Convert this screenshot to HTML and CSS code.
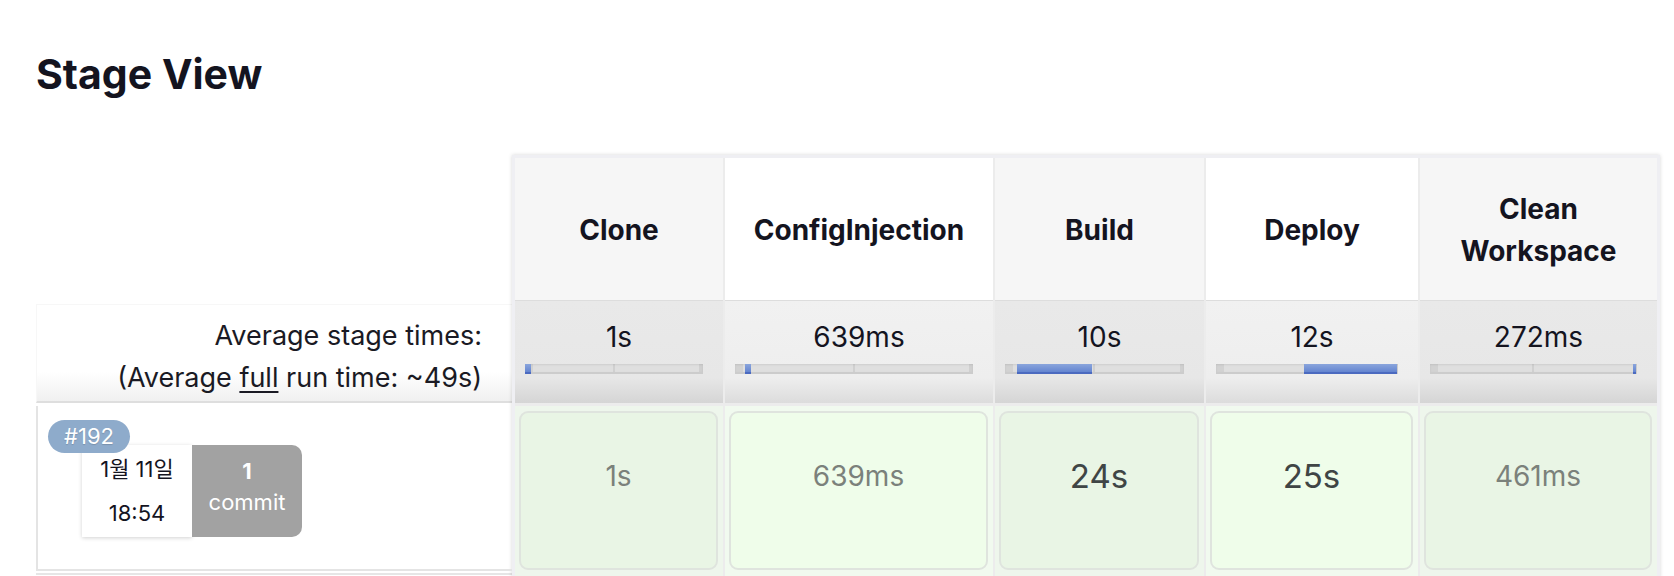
FILE: index.html
```html
<!DOCTYPE html>
<html lang="ko">
<head>
<meta charset="utf-8">
<title>Stage View</title>
<link rel="stylesheet" href="styles.css">
</head>
<body>
<div class="page">
  <h2 class="title">Stage View</h2>
  <div class="stage-view">
    <div class="labels">
      <div class="lab-head"></div>
      <div class="lab-avg">
        <div>Average stage times:</div>
        <div>(Average <span class="u">full</span> run time: ~49s)</div>
      </div>
      <div class="lab-build">
        <span class="badge">#192</span>
        <div class="build-meta">
          <div class="date">
            <div>1월 11일</div>
            <div>18:54</div>
          </div>
          <div class="commits">
            <div class="num">1</div>
            <div>commit</div>
          </div>
        </div>
      </div>
      <div class="row-sep"></div>
    </div>
    <div class="stages">
      <div class="head"><span>Clone</span></div>
      <div class="head alt"><span>ConfigInjection</span></div>
      <div class="head"><span>Build</span></div>
      <div class="head alt"><span>Deploy</span></div>
      <div class="head"><span>Clean Workspace</span></div>

      <div class="avg">
        <div class="avg-time">1s</div>
        <div class="track"><i class="fill" style="left:0px;width:6px"></i></div>
      </div>
      <div class="avg alt">
        <div class="avg-time">639ms</div>
        <div class="track"><i class="fill" style="left:10px;width:6px"></i></div>
      </div>
      <div class="avg">
        <div class="avg-time">10s</div>
        <div class="track"><i class="fill" style="left:12px;width:75px"></i></div>
      </div>
      <div class="avg alt">
        <div class="avg-time">12s</div>
        <div class="track"><i class="fill" style="left:88px;width:93px"></i></div>
      </div>
      <div class="avg">
        <div class="avg-time">272ms</div>
        <div class="track"><i class="fill" style="left:203px;width:3px"></i></div>
      </div>

      <div class="cell"><div class="box"><span class="dur">1s</span></div></div>
      <div class="cell alt"><div class="box"><span class="dur">639ms</span></div></div>
      <div class="cell"><div class="box"><span class="dur long">24s</span></div></div>
      <div class="cell alt"><div class="box"><span class="dur long">25s</span></div></div>
      <div class="cell"><div class="box"><span class="dur">461ms</span></div></div>
    </div>
  </div>
</div>
</body>
</html>
```

FILE: styles.css
```css
html, body {
  margin: 0;
  padding: 0;
  background: #ffffff;
}

body {
  font-family: Inter, "Noto Sans CJK KR", sans-serif;
  color: #14141f;
}

.page {
  padding-left: 36px;
}

.title {
  margin: 51px 0 0;
  font-size: 41px;
  line-height: 46px;
  font-weight: 700;
  color: #14141f;
}

.stage-view {
  display: flex;
  align-items: flex-start;
  margin-top: 58px;
}

/* left label column */
.labels {
  width: 476px;
  flex: none;
}

.lab-head {
  height: 145px;
}

.lab-avg {
  height: 86px;
  padding: 10px 30px 0 0;
  text-align: right;
  font-size: 27px;
  line-height: 42px;
  color: #1a1a24;
  background: linear-gradient(to bottom, #ffffff 0%, #ffffff 70%, #f0f0f0 100%);
  border-top: 1px solid #f7f7f7;
  border-left: 1px solid #f7f7f7;
  border-bottom: 2px solid #dedede;
  margin-top: 4px;
}

.u {
  text-decoration: underline;
  text-underline-offset: 4px;
}

.lab-build {
  position: relative;
  margin-top: 3px;
  height: 163px;
  border-left: 2px solid #e4e4e4;
  border-bottom: 2px solid #e4e4e4;
}

.badge {
  position: absolute;
  left: 10px;
  top: 14px;
  z-index: 2;
  width: 82px;
  height: 33px;
  border-radius: 17px;
  background: #8eabcb;
  color: #ffffff;
  font-size: 22px;
  line-height: 33px;
  text-align: center;
  text-shadow: 0 1px 1px rgba(0, 0, 0, 0.15);
}

.build-meta {
  display: flex;
  padding: 39px 0 0 44px;
}

.date {
  width: 110px;
  height: 90px;
  padding-top: 2px;
  background: #ffffff;
  box-shadow: 0 1px 4px rgba(0, 0, 0, 0.18);
  text-align: center;
  font-size: 22px;
  line-height: 44px;
  color: #14141f;
}

.commits {
  width: 110px;
  height: 81px;
  padding-top: 11px;
  background: #a2a2a2;
  border-radius: 0 10px 10px 0;
  text-align: center;
  font-size: 22px;
  line-height: 31px;
  color: #ffffff;
}

.commits .num {
  font-weight: 700;
}

.row-sep {
  margin-top: 2px;
  height: 8px;
  border-top: 2px solid #e6e6e6;
}

/* stage table */
.stages {
  display: grid;
  grid-template-columns: 208px 268px 209px 212px 237px;
  column-gap: 2px;
  background: #ececec;
  border: 3px solid #efeff3;
  border-bottom: 0;
  box-shadow: 0 0 4px rgba(0, 0, 0, 0.16);
}

.head {
  height: 142px;
  display: flex;
  align-items: center;
  justify-content: center;
  padding: 2px 12px 0;
  box-sizing: border-box;
  text-align: center;
  font-size: 28px;
  font-weight: 700;
  line-height: 42px;
  color: #14141f;
  background: #f6f6f6;
}

.head.alt {
  background: #ffffff;
}

.avg {
  height: 103px;
  box-sizing: border-box;
  padding-top: 19px;
  background: linear-gradient(to bottom, #e9e9e9 0%, #e7e7e7 75%, #d5d5d5 100%);
  border-top: 1px solid #dddddd;
}

.avg.alt {
  background: linear-gradient(to bottom, #f1f1f1 0%, #eeeeee 75%, #dcdcdc 100%);
}

.avg-time {
  text-align: center;
  font-size: 28px;
  line-height: 34px;
  color: #14141f;
}

.track {
  position: relative;
  height: 8px;
  margin: 10px 20px 0 10px;
  background: linear-gradient(to right, #d2d2d2 0, #d2d2d2 8px, #dfdfdf 8px, #dfdfdf calc(50% - 1px), #d0d0d0 calc(50% - 1px), #d0d0d0 calc(50% + 1px), #dfdfdf calc(50% + 1px), #dfdfdf calc(100% - 4px), #d0d0d0 calc(100% - 4px));
  border-bottom: 2px solid #cccccc;
  box-shadow: inset 0 1px 2px rgba(0, 0, 0, 0.08);
}

.fill {
  position: absolute;
  top: 0;
  height: 8px;
  background: linear-gradient(to bottom, #8aa5dc, #6485d0);
  border-bottom: 2px solid #4b6ac0;
}

.cell {
  margin-top: 3px;
  height: 172px;
  box-sizing: border-box;
  padding: 5px 5px 0 4px;
  background: #eef6ec;
}

.cell.alt {
  background: #f1faef;
}

.box {
  height: 159px;
  box-sizing: border-box;
  padding-top: 42px;
  border: 2px solid #dfe4de;
  border-radius: 9px;
  background: #e9f5e5;
  text-align: center;
  line-height: 42px;
}

.cell.alt .box {
  background: #effdea;
}

.dur {
  font-size: 28px;
  color: #7b817b;
}

.dur.long {
  font-size: 33px;
  color: #3f4545;
}
```
